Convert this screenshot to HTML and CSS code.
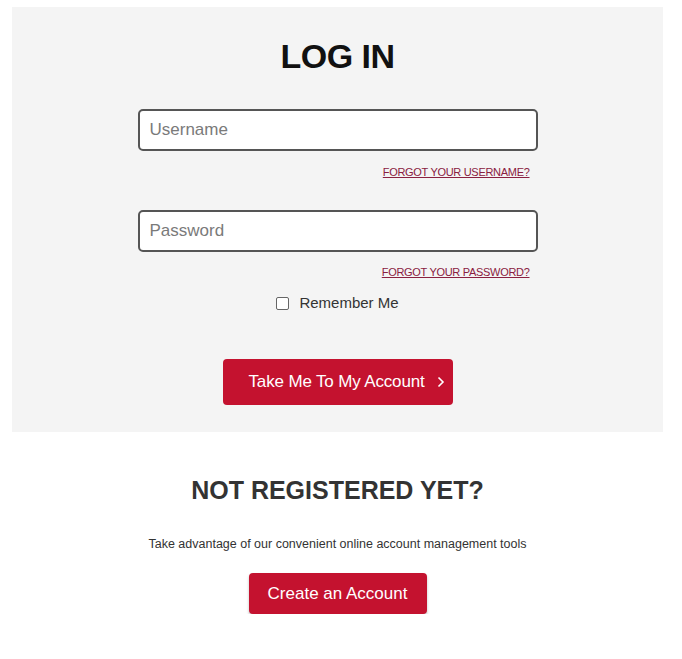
FILE: index.html
```html
<!DOCTYPE html>
<html lang="en">

<head>

  <meta charset="utf-8">

  <title>Log In</title>

  <link rel="stylesheet" href="styles.css">
</head>

<body>

  <div class="login">
    <h1 class="login-title">LOG IN</h1>

    <form class="login-form">
      <input class="field" type="text" placeholder="Username">
      <a class="forgot forgot-user" href="#">FORGOT YOUR USERNAME?</a>

      <input class="field field-pass" type="password" placeholder="Password">
      <a class="forgot forgot-pass" href="#">FORGOT YOUR PASSWORD?</a>

      <label class="remember">
        <span class="check"></span>
        Remember Me
      </label>

      <button class="btn btn-login" type="button">
        Take Me To My Account
        <svg class="chevron" width="8" height="12" viewBox="0 0 8 12">
          <path d="M1.5 1.5 L6 6 L1.5 10.5" fill="none" stroke="white" stroke-width="1.6"></path>
        </svg>
      </button>
    </form>
  </div>

  <div class="register">
    <h2 class="register-title">NOT REGISTERED YET?</h2>
    <p class="register-text">Take advantage of our convenient online account management tools</p>
    <button class="btn btn-create" type="button">Create an Account</button>
  </div>

</body>

</html>
```

FILE: styles.css
```css
body {
  margin: 7px 19px 0 12px;
  background: #fff;
  font-family: "Liberation Sans", Arial, sans-serif;
  color: #222;
}

.login {
  background: #f4f4f4;
  height: 425px;
  box-sizing: border-box;
  padding-top: 29px;
  display: flex;
  flex-direction: column;
  align-items: center;
}

.login-title {
  margin: 0;
  font-size: 34px;
  line-height: 40px;
  font-weight: bold;
  color: #111;
  letter-spacing: -0.5px;
}

.login-form {
  width: 400px;
  margin-top: 33px;
  display: flex;
  flex-direction: column;
}

.field {
  width: 400px;
  height: 42px;
  box-sizing: border-box;
  border: 2px solid #555;
  border-radius: 5px;
  background: #fff;
  padding: 0 10px;
  font-family: inherit;
  font-size: 17px;
  color: #333;
  outline: none;
}

.field::placeholder {
  color: #7a7a7a;
}

.forgot {
  align-self: flex-end;
  margin-right: 8px;
  font-size: 11px;
  line-height: 14px;
  letter-spacing: -0.3px;
  color: #8a2040;
  text-decoration: underline;
}

.forgot-user {
  margin-top: 14px;
}

.field-pass {
  margin-top: 31px;
}

.forgot-pass {
  margin-top: 13px;
}

.remember {
  align-self: center;
  display: flex;
  align-items: center;
  gap: 10px;
  margin-top: 15px;
  font-size: 15px;
  line-height: 18px;
  color: #333;
}

.check {
  width: 11px;
  height: 11px;
  border: 1px solid #666;
  border-radius: 2px;
  background: #fff;
}

.btn {
  border: none;
  border-radius: 4px;
  background: #c4122f;
  color: #fff;
  font-family: inherit;
  font-size: 17px;
  cursor: pointer;
}

.btn-login {
  align-self: center;
  width: 230px;
  height: 46px;
  margin-top: 47px;
  display: flex;
  align-items: center;
  gap: 12px;
  padding: 0 0 0 26px;
  letter-spacing: -0.15px;
}

.chevron {
  display: block;
}

.register {
  display: flex;
  flex-direction: column;
  align-items: center;
}

.register-title {
  margin: 43px 0 0 0;
  font-size: 25px;
  line-height: 30px;
  font-weight: bold;
  color: #333;
}

.register-text {
  margin: 31px 0 0 0;
  font-size: 12.5px;
  line-height: 16px;
  color: #333;
}

.btn-create {
  width: 178px;
  height: 41px;
  margin-top: 21px;
  box-shadow: 0 2px 3px rgba(0, 0, 0, 0.25);
}
```
